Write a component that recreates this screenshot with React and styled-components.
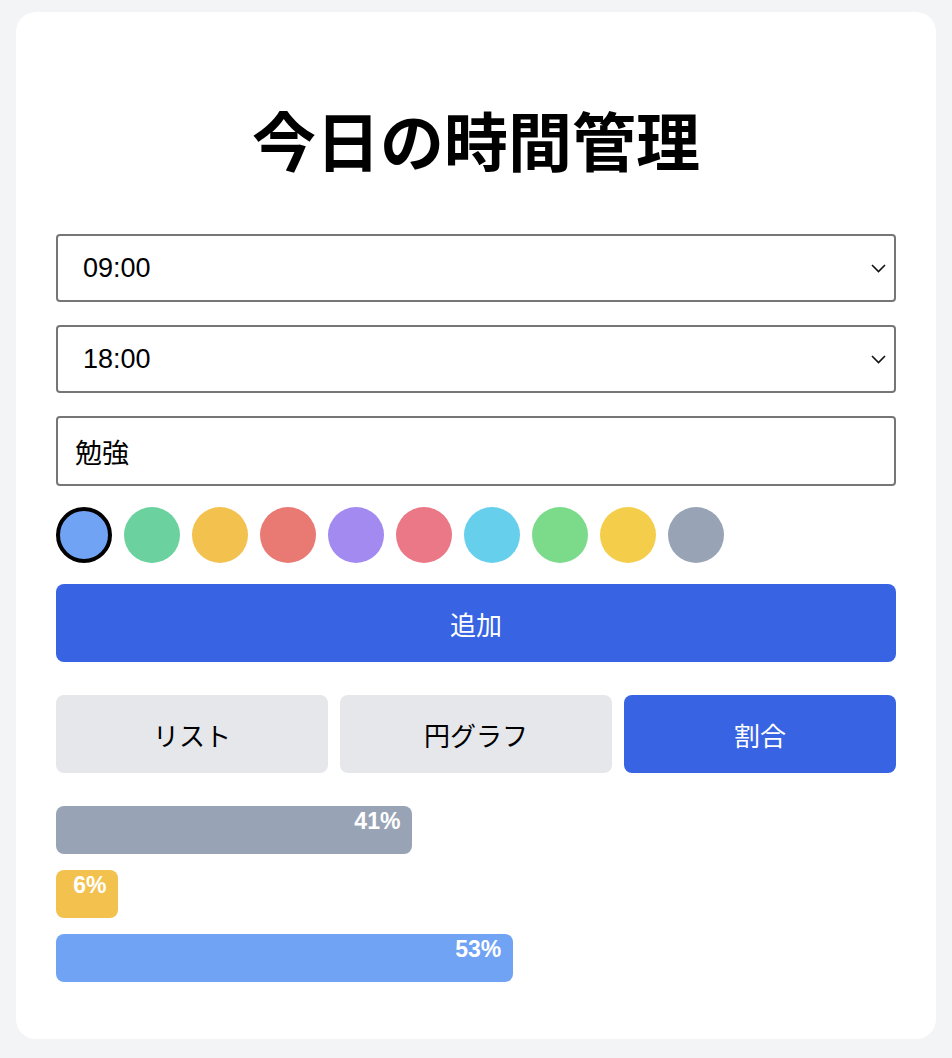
import React, { useState } from "react";
import styled, { createGlobalStyle } from "styled-components";

const GlobalStyle = createGlobalStyle`
  html, body {
    margin: 0;
    padding: 0;
    background: #f3f4f6;
    font-family: "Liberation Sans", "Noto Sans CJK JP", sans-serif;
    color: #000;
  }
`;

const Page = styled.div`
  padding: 12px 16px 20px;
`;

const Card = styled.div`
  background: #fff;
  border-radius: 20px;
  padding: 40px 40px 41px;
`;

const Title = styled.h1`
  margin: 46px 0 43px;
  text-align: center;
  font-size: 64px;
  font-weight: 700;
  line-height: 93px;
  font-family: "Liberation Sans", "Noto Sans CJK JP", sans-serif;
`;

const Field = styled.div`
  position: relative;
  margin-bottom: ${(p) => p.$mb}px;
`;

const Select = styled.select`
  appearance: none;
  -webkit-appearance: none;
  display: block;
  width: 100%;
  height: 68px;
  box-sizing: border-box;
  border: 2px solid #767676;
  border-radius: 4px;
  background: #fff;
  padding: 0 20px 0 25px;
  font-size: 27px;
  font-family: "Liberation Sans", "Noto Sans CJK JP", sans-serif;
  color: #000;
`;

const Chevron = styled.svg`
  position: absolute;
  right: 10px;
  top: 30px;
  width: 15px;
  height: 9px;
  pointer-events: none;
`;

const TextInput = styled.input`
  display: block;
  width: 100%;
  height: 70px;
  box-sizing: border-box;
  border: 2px solid #767676;
  border-radius: 4px;
  padding: 0 17px;
  font-size: 27px;
  font-family: "Liberation Sans", "Noto Sans CJK JP", sans-serif;
  color: #000;
  outline: none;
`;

const Swatches = styled.div`
  display: flex;
  gap: 12px;
  margin-bottom: 21px;
`;

const Swatch = styled.button`
  width: 56px;
  height: 56px;
  border-radius: 50%;
  box-sizing: border-box;
  background: ${(p) => p.$color};
  border: ${(p) => (p.$active ? "4px solid #000" : "none")};
  padding: 0;
  cursor: pointer;
`;

const AddButton = styled.button`
  display: block;
  width: 100%;
  height: 78px;
  border: none;
  border-radius: 8px;
  background: #3864e4;
  color: #fff;
  font-size: 26px;
  font-family: "Liberation Sans", "Noto Sans CJK JP", sans-serif;
  margin-bottom: 33px;
  cursor: pointer;
`;

const Tabs = styled.div`
  display: grid;
  grid-template-columns: repeat(3, 1fr);
  gap: 12px;
  margin-bottom: 33px;
`;

const Tab = styled.button`
  height: 78px;
  border: none;
  border-radius: 8px;
  background: ${(p) => (p.$active ? "#3864e4" : "#e5e7eb")};
  color: ${(p) => (p.$active ? "#fff" : "#000")};
  font-size: 26px;
  font-family: "Liberation Sans", "Noto Sans CJK JP", sans-serif;
  cursor: pointer;
`;

const Bar = styled.div`
  height: 48px;
  box-sizing: content-box;
  padding: 0 12px 0 0;
  margin-bottom: 16px;
  border-radius: 8px;
  background: ${(p) => p.$color};
  color: #fff;
  font-size: 23px;
  font-weight: 700;
  text-align: right;
  line-height: 26px;
`;

const BarLabel = styled.span`
  display: block;
  padding-top: 2px;
  white-space: nowrap;
`;

const colors = [
  "#71a3f5",
  "#6bd19f",
  "#f2c14e",
  "#e97a73",
  "#a38af0",
  "#eb7886",
  "#66cfec",
  "#7bdb8a",
  "#f4ce4a",
  "#98a4b5",
];

const bars = [
  { pct: 41, color: "#98a4b5" },
  { pct: 6, color: "#f2c14e" },
  { pct: 53, color: "#71a3f5" },
];

const times = [];
for (let h = 0; h < 24; h++) times.push(`${String(h).padStart(2, "0")}:00`);

function ChevronIcon() {
  return (
    <Chevron viewBox="0 0 15 9" fill="none">
      <path d="M1 1l6.5 6.5L14 1" stroke="#111" strokeWidth="1.6" />
    </Chevron>
  );
}

export default function App() {
  const [start, setStart] = useState("09:00");
  const [end, setEnd] = useState("18:00");
  const [label, setLabel] = useState("勉強");
  const [color, setColor] = useState(0);
  const [tab, setTab] = useState(2);

  return (
    <Page>
      <GlobalStyle />
      <Card>
        <Title>今日の時間管理</Title>
        <Field $mb={23}>
          <Select value={start} onChange={(e) => setStart(e.target.value)}>
            {times.map((t) => (
              <option key={t}>{t}</option>
            ))}
          </Select>
          <ChevronIcon />
        </Field>
        <Field $mb={23}>
          <Select value={end} onChange={(e) => setEnd(e.target.value)}>
            {times.map((t) => (
              <option key={t}>{t}</option>
            ))}
          </Select>
          <ChevronIcon />
        </Field>
        <Field $mb={21}>
          <TextInput value={label} onChange={(e) => setLabel(e.target.value)} />
        </Field>
        <Swatches>
          {colors.map((c, i) => (
            <Swatch
              key={c + i}
              $color={c}
              $active={i === color}
              onClick={() => setColor(i)}
            />
          ))}
        </Swatches>
        <AddButton>追加</AddButton>
        <Tabs>
          {["リスト", "円グラフ", "割合"].map((t, i) => (
            <Tab key={t} $active={i === tab} onClick={() => setTab(i)}>
              {t}
            </Tab>
          ))}
        </Tabs>
        {bars.map((b, i) => (
          <Bar key={i} $color={b.color} style={{ width: `${b.pct}%` }}>
            <BarLabel>{b.pct}%</BarLabel>
          </Bar>
        ))}
      </Card>
    </Page>
  );
}
